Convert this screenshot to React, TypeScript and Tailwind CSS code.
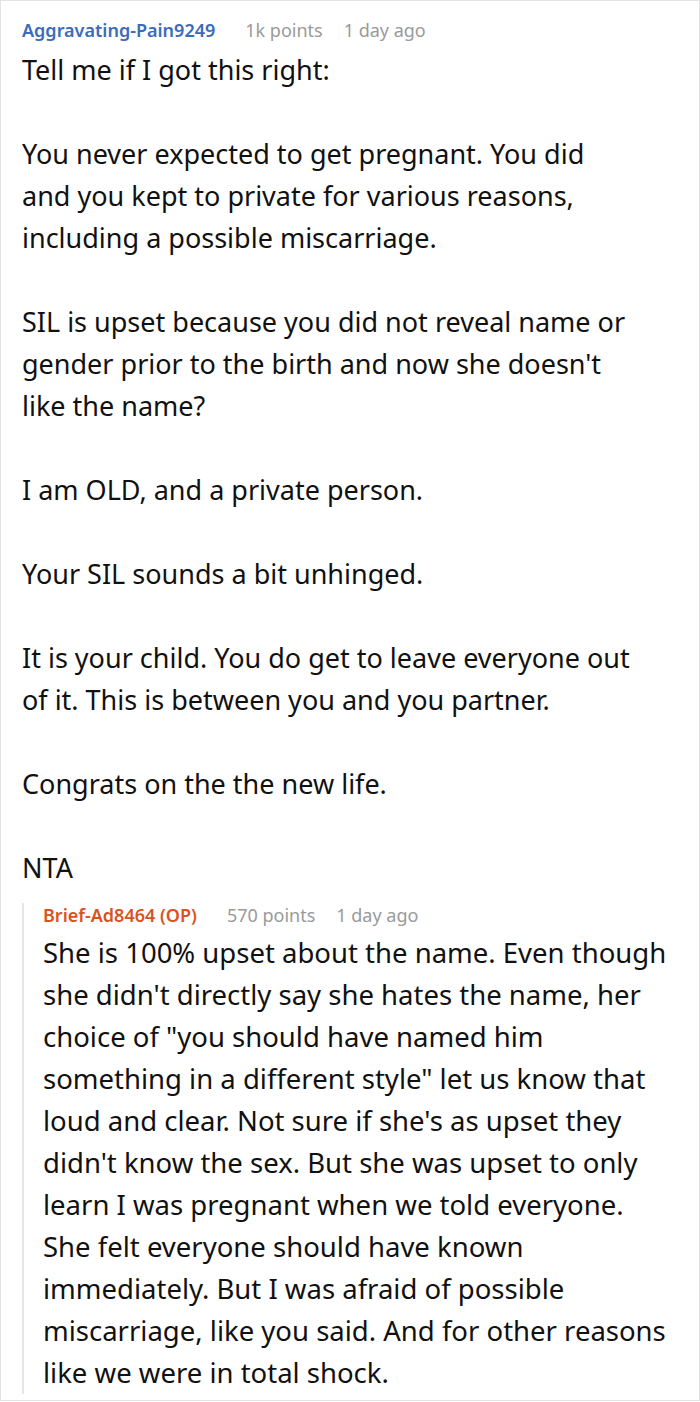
const font = { fontFamily: '"Noto Sans", "Open Sans", sans-serif' };

function Meta({ name, nameClass, points, ago }: { name: string; nameClass: string; points: string; ago: string }) {
  return (
    <div className="flex items-center h-6 text-[18px] leading-6">
      <span className={`font-semibold ${nameClass}`}>{name}</span>
      <span className="ml-[30px] text-[#9a9a9a]">{points}</span>
      <span className="ml-[21px] text-[#9a9a9a]">{ago}</span>
    </div>
  );
}

const mainParas: string[][] = [
  ['Tell me if I got this right:'],
  ['You never expected to get pregnant. You did', 'and you kept to private for various reasons,', 'including a possible miscarriage.'],
  ['SIL is upset because you did not reveal name or', "gender prior to the birth and now she doesn't", 'like the name?'],
  ['I am OLD, and a private person.'],
  ['Your SIL sounds a bit unhinged.'],
  ['It is your child. You do get to leave everyone out', 'of it. This is between you and you partner.'],
  ['Congrats on the the new life.'],
  ['NTA'],
];

const replyLines = [
  'She is 100% upset about the name. Even though',
  "she didn't directly say she hates the name, her",
  'choice of "you should have named him',
  'something in a different style" let us know that',
  "loud and clear. Not sure if she's as upset they",
  "didn't know the sex. But she was upset to only",
  'learn I was pregnant when we told everyone.',
  'She felt everyone should have known',
  'immediately. But I was afraid of possible',
  'miscarriage, like you said. And for other reasons',
  'like we were in total shock.',
];

export default function App() {
  return (
    <div style={font} className="w-[700px] h-[1401px] overflow-hidden bg-white border border-[#e3e3e3] text-[#111]">
      <div className="pl-[21px] w-[679px] pt-[17px]">
        <Meta name="Aggravating-Pain9249" nameClass="text-[#3a6bbd]" points="1k points" ago="1 day ago" />
        <div className="mt-[7px] flex flex-col gap-[42px] text-[27px] leading-[42px]">
          {mainParas.map((p, i) => (
            <p key={i}>
              {p.map((l, j) => (
                <span key={j} className="block whitespace-nowrap">{l}</span>
              ))}
            </p>
          ))}
        </div>
        <div className="mt-[14px] border-l-2 border-[#e6e6e6] pl-[19px]">
          <Meta name="Brief-Ad8464 (OP)" nameClass="text-[#d9531e]" points="570 points" ago="1 day ago" />
          <p className="mt-[5px] -mb-[11px] text-[27.5px] leading-[42px]">
            {replyLines.map((l, j) => (
              <span key={j} className="block whitespace-nowrap">{l}</span>
            ))}
          </p>
        </div>
      </div>
    </div>
  );
}
